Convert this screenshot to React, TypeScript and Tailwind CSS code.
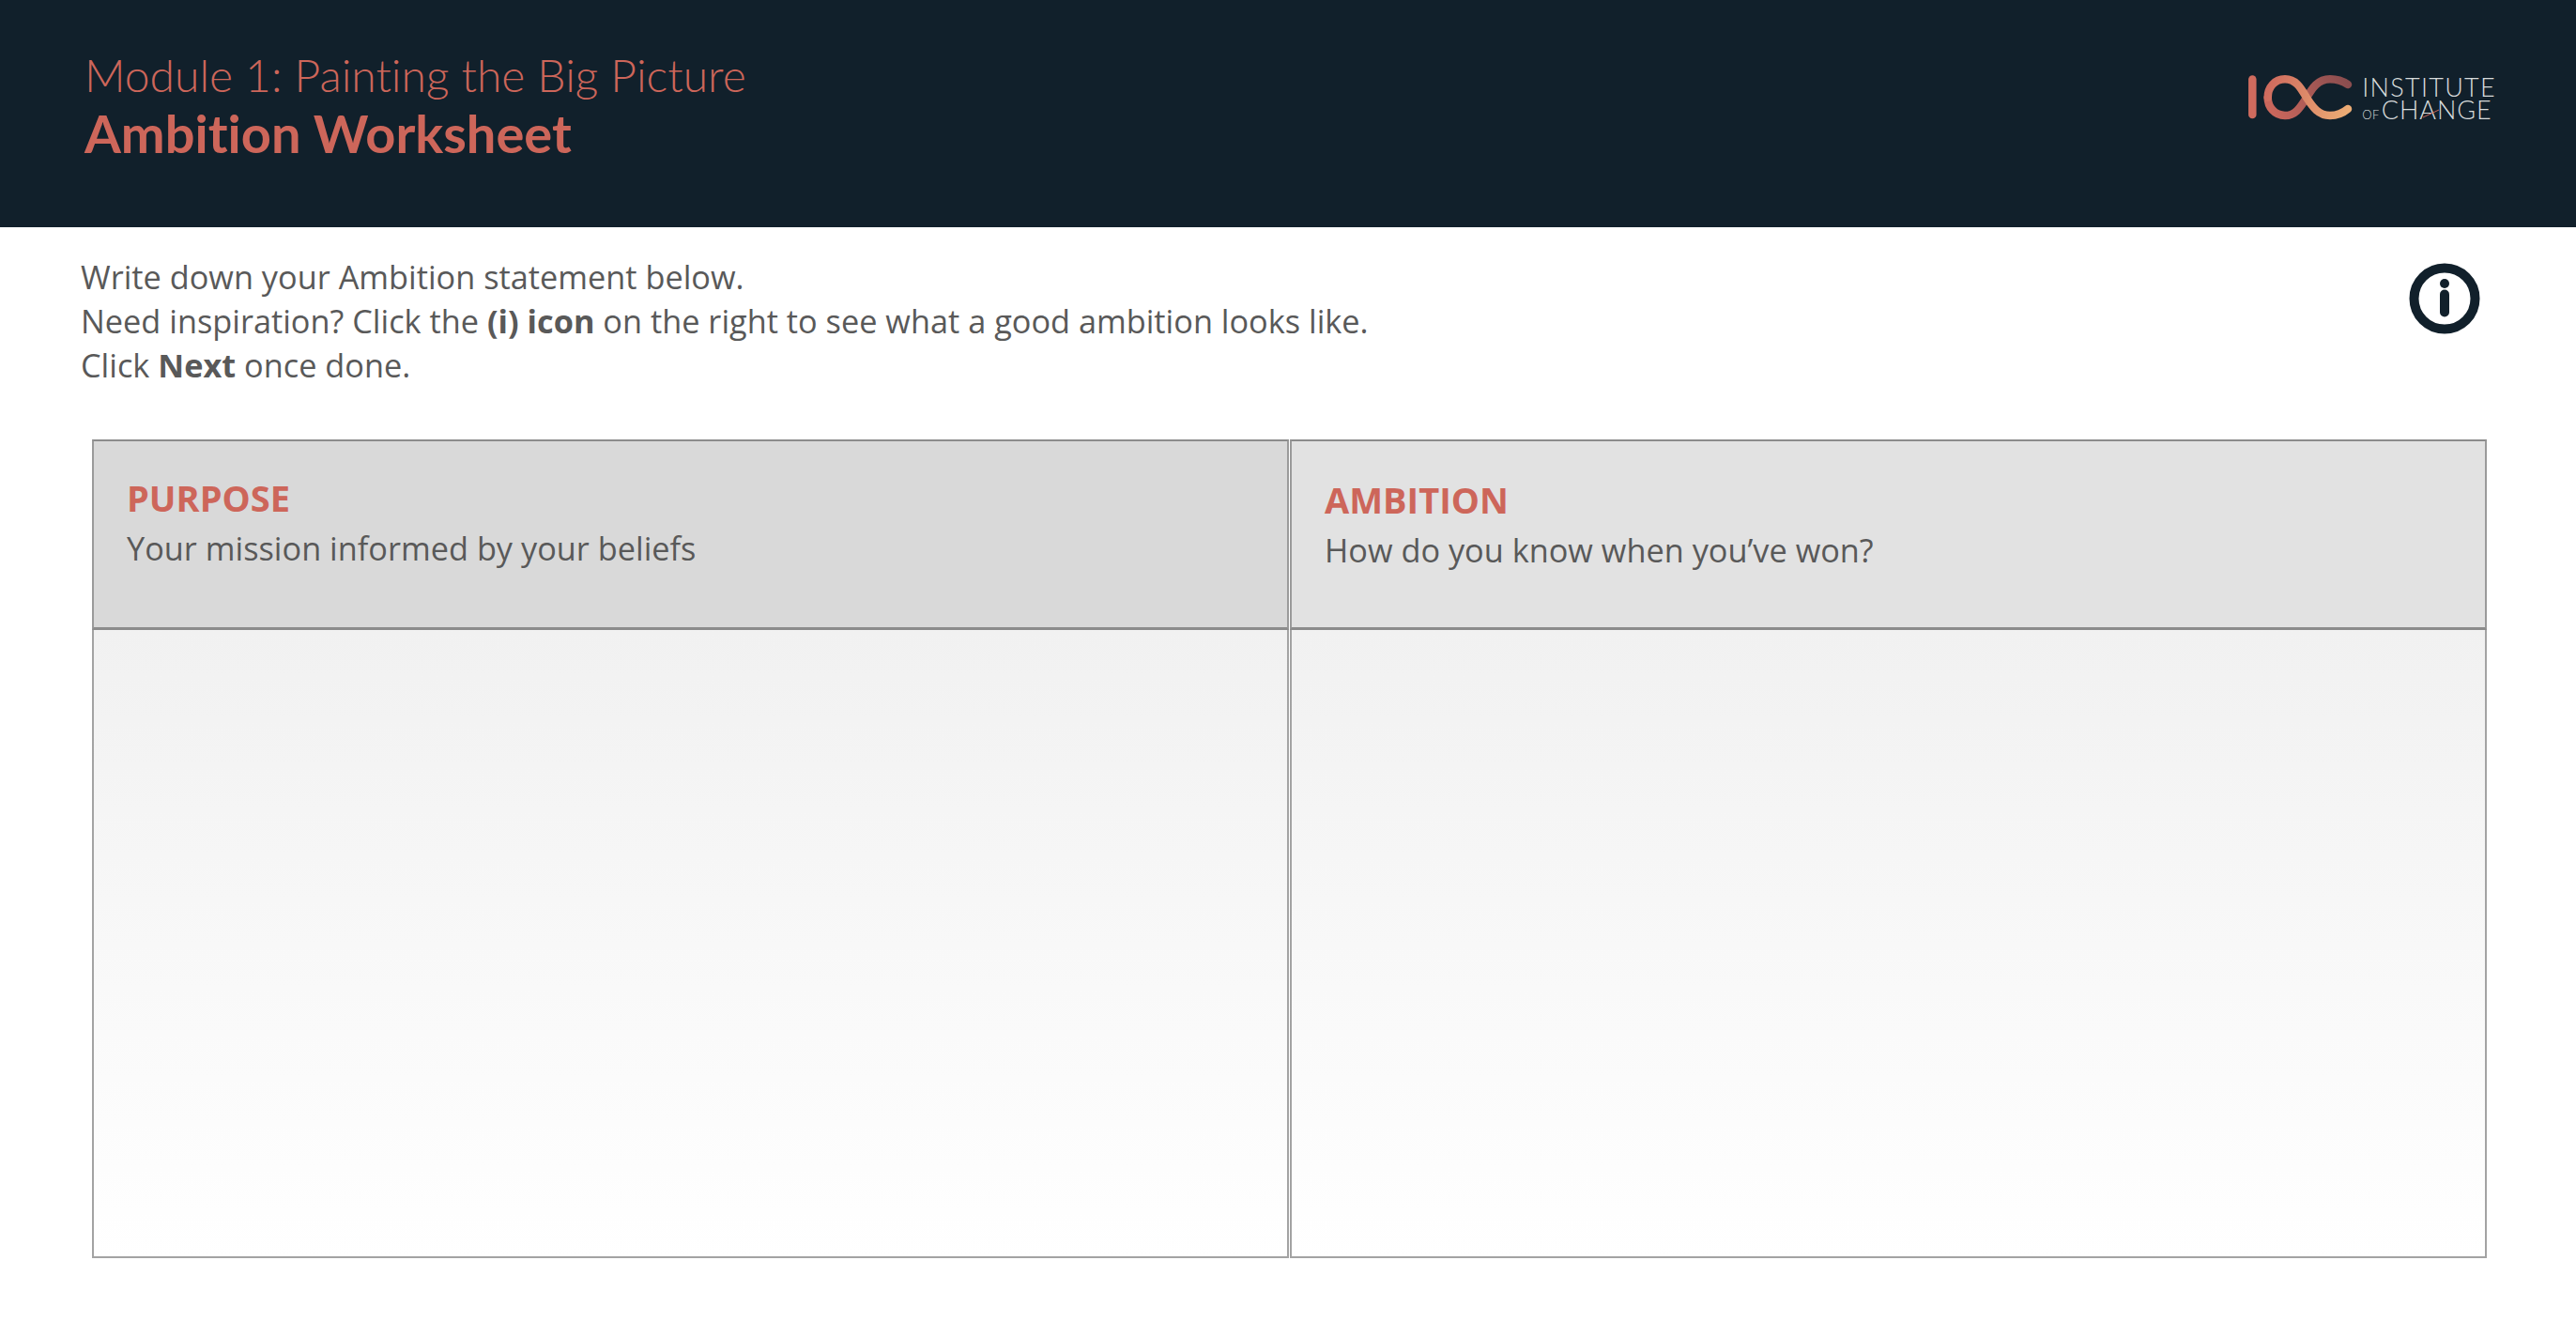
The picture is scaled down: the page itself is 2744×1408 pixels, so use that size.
function IocLogo() {
  return (
    <div className="relative flex items-center">
      <svg width="120" height="64" viewBox="0 0 120 64" fill="none">
        <defs>
          <linearGradient id="iocDark" x1="112" y1="14" x2="30" y2="50" gradientUnits="userSpaceOnUse">
            <stop offset="0" stopColor="#8a4d4f" />
            <stop offset="1" stopColor="#cb675c" />
          </linearGradient>
          <linearGradient id="iocLight" x1="26" y1="20" x2="112" y2="46" gradientUnits="userSpaceOnUse">
            <stop offset="0" stopColor="#cf6b5e" />
            <stop offset="1" stopColor="#ecac75" />
          </linearGradient>
        </defs>
        <path d="M10.300 12.500V50" stroke="#cf6b5e" strokeWidth="8.500" strokeLinecap="round" />
        <path d="M112 18C106 14 100 12.300 93 12.300C80 12.300 74 22 68 32C62 41 57 51 45 51C34 51 26.700 42 26.700 31.700" stroke="url(#iocDark)" strokeWidth="8.500" strokeLinecap="round" />
        <path d="M26.700 31.700C26.700 21 34 12.300 45 12.300C57 12.300 62 22 68 32C74 41 80 51 93 51C100 51 106 49 112 44" stroke="url(#iocLight)" strokeWidth="8.500" strokeLinecap="round" />
      </svg>
      <div className="mt-[1px] ml-[7px] flex flex-col font-['Lato',sans-serif] font-light text-[#d8dcdc]">
        <div className="text-[27px] leading-[24px] tracking-[1.3px]">INSTITUTE</div>
        <div className="flex items-baseline text-[27px] leading-[24px] tracking-[0.9px]">
          <span className="mr-[2px] text-[13px] leading-none tracking-[0.5px]">OF</span>CHANGE
        </div>
      </div>
      {/* red slash through the A of CHANGE */}
      <svg width="20" height="10" viewBox="0 0 20 10" className="absolute top-[44px] left-[191px]">
        <path d="M1 9L18 1" stroke="#cd665a" strokeWidth="1" />
      </svg>
    </div>
  )
}

function InfoIcon() {
  return (
    <svg width="76" height="76" viewBox="0 0 76 76" fill="none" className="shrink-0">
      <circle cx="38" cy="38" r="32.500" stroke="#11202b" strokeWidth="10" />
      <circle cx="38" cy="22" r="5" fill="#11202b" />
      <rect x="33" y="28.500" width="10" height="29" rx="5" fill="#11202b" />
    </svg>
  )
}

interface ColumnProps {
  title: string
  subtitle: string
  headClass: string
}

function Column({ title, subtitle, headClass }: ColumnProps) {
  return (
    <div className="flex flex-col border-2 border-t-0 border-[#a3a3a3]">
      <div className={`-mx-[2px] h-[203px] shrink-0 border-x-2 border-t-2 border-b-[3px] border-x-[#9a9a9a] border-t-[#8c8c8c] border-b-[#8c8c8c] pl-[35px] ${headClass}`}>
        <div className="text-[38px] leading-[60px] font-bold text-[#cd665a]">{title}</div>
        <div className="text-[34.300px] leading-[48px] text-[#595959]">{subtitle}</div>
      </div>
      <div className="flex-1 bg-gradient-to-b from-[#f1f1f1] to-white" />
    </div>
  )
}

export default function App() {
  return (
    <div className="flex h-[1408px] w-[2744px] flex-col bg-white font-['Open_Sans',sans-serif]">
      {/* Header */}
      <header className="flex h-[242px] shrink-0 items-start justify-between bg-[#11202b] pr-[85px] pl-[90px]">
        <div className="pt-[48px] font-['Lato',sans-serif] text-[#cd665a] [font-variant-ligatures:none]">
          <div className="text-[48px] leading-[64px] font-light">Module 1: Painting the Big Picture</div>
          <div className="text-[56px] leading-[60px] font-bold">Ambition Worksheet</div>
        </div>
        <div className="pt-[72px]">
          <IocLogo />
        </div>
      </header>

      {/* Instructions */}
      <div className="flex items-start justify-between pt-[29px] pr-[102px] pl-[86px]">
        <div className="text-[34.300px] leading-[47px] text-[#595959]">
          <div>Write down your Ambition statement below.</div>
          <div>
            Need inspiration? Click the <b>(i) icon</b> on the right to see what a good ambition looks like.
          </div>
          <div>
            Click <b>Next</b> once done.
          </div>
        </div>
        <div className="pt-[9px]">
          <InfoIcon />
        </div>
      </div>

      {/* Table */}
      <div className="mt-[56px] ml-[98px] grid h-[872px] w-[2551px] grid-cols-2 gap-[1px]">
        <Column
          title="PURPOSE"
          subtitle="Your mission informed by your beliefs"
          headClass="bg-[#d9d9d9] pt-[30px]"
        />
        <Column
          title="AMBITION"
          subtitle="How do you know when you’ve won?"
          headClass="bg-[#e2e2e2] pt-[32px]"
        />
      </div>
    </div>
  )
}
